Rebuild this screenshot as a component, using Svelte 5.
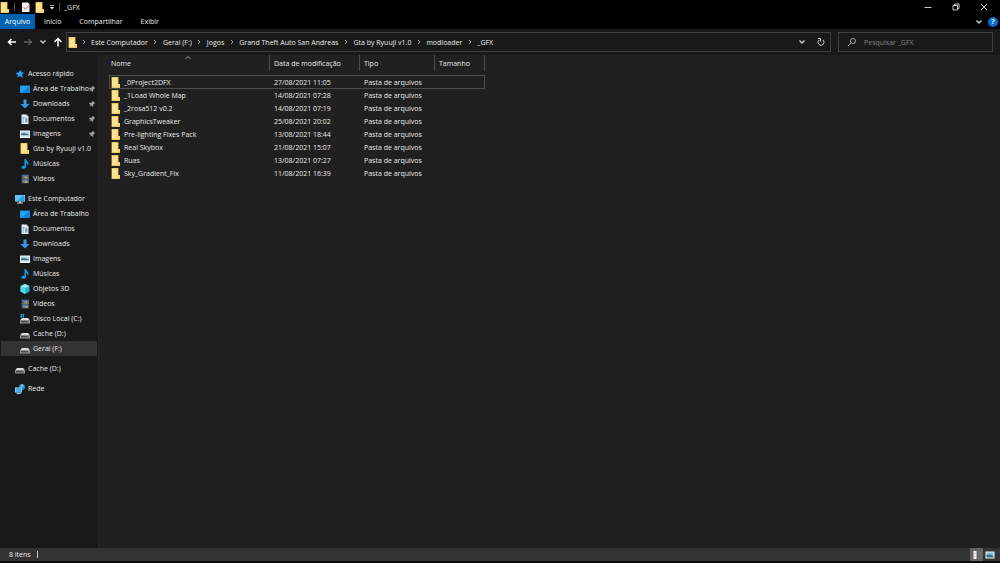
<script lang="ts">
  type NavItem = { name: string; icon: string; pinned?: boolean; selected?: boolean };
  type NavGroup = { root: NavItem; items: NavItem[] };

  const tabs = ["Início", "Compartilhar", "Exibir"];
  const crumbs = [
    "Este Computador",
    "Geral (F:)",
    "Jogos",
    "Grand Theft Auto San Andreas",
    "Gta by Ryuuji v1.0",
    "modloader",
    "_GFX",
  ];

  const groups: NavGroup[] = [
    {
      root: { name: "Acesso rápido", icon: "star" },
      items: [
        { name: "Área de Trabalho", icon: "desktop", pinned: true },
        { name: "Downloads", icon: "download", pinned: true },
        { name: "Documentos", icon: "document", pinned: true },
        { name: "Imagens", icon: "image", pinned: true },
        { name: "Gta by Ryuuji v1.0", icon: "folder" },
        { name: "Músicas", icon: "music" },
        { name: "Vídeos", icon: "video" },
      ],
    },
    {
      root: { name: "Este Computador", icon: "computer" },
      items: [
        { name: "Área de Trabalho", icon: "desktop" },
        { name: "Documentos", icon: "document" },
        { name: "Downloads", icon: "download" },
        { name: "Imagens", icon: "image" },
        { name: "Músicas", icon: "music" },
        { name: "Objetos 3D", icon: "cube" },
        { name: "Vídeos", icon: "video" },
        { name: "Disco Local (C:)", icon: "system" },
        { name: "Cache (D:)", icon: "drive" },
        { name: "Geral (F:)", icon: "drive", selected: true },
      ],
    },
    { root: { name: "Cache (D:)", icon: "drive" }, items: [] },
    { root: { name: "Rede", icon: "network" }, items: [] },
  ];

  const files = [
    { name: "_0Project2DFX", date: "27/08/2021 11:05" },
    { name: "_1Load Whole Map", date: "14/08/2021 07:28" },
    { name: "_2rosa512 v0.2", date: "14/08/2021 07:19" },
    { name: "GraphicsTweaker", date: "25/08/2021 20:02" },
    { name: "Pre-lighting Fixes Pack", date: "13/08/2021 18:44" },
    { name: "Real Skybox", date: "21/08/2021 15:07" },
    { name: "Ruas", date: "13/08/2021 07:27" },
    { name: "Sky_Gradient_Fix", date: "11/08/2021 16:39" },
  ];

  let focused = $state(0);
  let query = $state("");
</script>

{#snippet icon(name: string)}
  <svg class="icon icon-{name}" viewBox={name === "folder" ? "0 0 20 22" : "0 0 20 20"} aria-hidden="true">
    {#if name === "folder"}
      <path d="M1 0h14v14h3v8H1z" fill="#d9ad45" />
      <path d="M2 1h12v20H2z" fill="#fde391" />
      <path d="M14 14h4v7h-4z" fill="#f6d777" />
      <path d="M12 2h2v19h-2z" fill="#f8d878" />
    {:else if name === "star"}
      <path d="M11 2l2 5 6 0-5 4 2 7-6-4-6 3 2-5-5-4 6-1z" fill="#2a9df4" />
    {:else if name === "desktop"}
      <path d="M0 3h20v15H0z" fill="#0a84e0" />
      <path d="M1 4h18L4 17H1z" fill="#1fa4f5" />
    {:else if name === "download"}
      <path d="M7 1h6v9h6l-9 9-9-9h6z" fill="#3a96e8" />
    {:else if name === "document"}
      <path d="M3 1h10l4 4v15H3z" fill="#e6eef4" />
      <path d="M13 1v4h4z" fill="#9fb4c4" />
      <path d="M5 6h4v3H5zM5 11h3v2H5zM5 15h3v2H5z" fill="#5a9fd0" />
      <path d="M10 8h5v9h-5z" fill="#8da6b8" />
    {:else if name === "image"}
      <path d="M0 3h20v15H0z" fill="#edf2f5" />
      <path d="M2 5h16v6H2z" fill="#a9d4ee" />
      <path d="M2 9l6-1 10 3v2H2z" fill="#3f6f80" />
      <path d="M2 13h16v2H2z" fill="#c4dce8" />
    {:else if name === "music"}
      <path d="M9 0h3c0 4 6 5 5 11l-2 3c1-4-2-6-3-7v9c0 4-9 5-9 1 0-2 3-4 6-3z" fill="#149df2" />
    {:else if name === "video"}
      <path d="M3 1h15v18H3z" fill="#44484e" />
      <path d="M6 2h9v7H6z" fill="#3f74cc" />
      <path d="M6 11h9v7H6z" fill="#5084c4" />
      <path d="M9 5h6v4H9zM10 14h5v4h-5z" fill="#d0a03a" />
      <path d="M4 3h1v2H4zM4 8h1v2H4zM4 13h1v2H4zM16 3h1v2h-1zM16 8h1v2h-1zM16 13h1v2h-1z" fill="#aaa" />
    {:else if name === "computer"}
      <path d="M0 2h20v13H0z" fill="#9ad7f7" />
      <path d="M1 3h18v11H1z" fill="#2d9ee4" />
      <path d="M1 3h15L4 14H1z" fill="#65c3f4" />
      <path d="M8 15h4v2h4v2H4v-2h4z" fill="#b7c9d5" />
    {:else if name === "cube"}
      <path d="M10 0l9 4v11l-9 5-9-5V4z" fill="#22b7cf" />
      <path d="M10 0l9 4-9 4-9-4z" fill="#9eeaf4" />
      <path d="M1 4l9 4v12l-9-5z" fill="#55d5e5" />
    {:else if name === "system" || name === "drive"}
      {#if name === "system"}
        <path d="M1 0h3v3H1zM5 0h3v3H5zM1 4h3v3H1zM5 4h3v3H5z" fill="#19b4ee" />
      {/if}
      <path d="M4 8h12l4 5H0z" fill="#dcdcdc" />
      <path d="M0 13h20v6H0z" fill="#9b9b9b" />
      <path d="M2 14h16v3H2z" fill="#4a4a4a" />
      <path d="M15 15h3v1h-3z" fill="#62e06a" />
    {:else if name === "network"}
      <circle cx="14" cy="6" r="6" fill="#2c86c8" />
      <path d="M11 2l5-1 1 4-4 1z" fill="#8fd0f0" />
      <path d="M0 7h14v10H0z" fill="#b8e4f8" />
      <path d="M1 8h12v8H1z" fill="#45aee6" />
      <path d="M5 17h4v1h3v2H3v-2h2z" fill="#9db9c9" />
    {:else if name === "pin"}
      <path d="M12 2l6 6-2 1-3 3v4l-2 1-4-4-5 5 4-6-4-4 2-1h4l3-3z" fill="#98a0a6" />
    {:else if name === "check"}
      <path d="M2 1h12l3 3v16H2z" fill="#f2f0ef" />
      <path d="M5 10l4 5 6-8" fill="none" stroke="#db6847" stroke-width="2" />
    {:else if name === "customize"}
      <path d="M3 3h14v3H3zM3 10h14l-7 8z" fill="#eee" />
    {:else if name === "back"}
      <path d="M18 10H3M9 4l-6 6 6 6" class="line strong" />
    {:else if name === "forward"}
      <path d="M2 10h15M11 4l6 6-6 6" class="line dim" />
    {:else if name === "up"}
      <path d="M10 19V3M3 10l7-7 7 7" class="line strong" />
    {:else if name === "down"}
      <path d="M5 7l5 5 5-5" class="line bold" />
    {:else if name === "next"}
      <path d="M8 6l4 4-4 4" class="line thin" />
    {:else if name === "sort"}
      <path d="M5 12l5-5 5 5" class="line thin" />
    {:else if name === "refresh"}
      <path d="M14 6a6 6 0 1 1-8 0M4 3h5v6" class="line" />
    {:else if name === "search"}
      <circle cx="12" cy="8" r="5" class="line thin" />
      <path d="M8 12l-6 6" class="line thin" />
    {:else if name === "minimize"}
      <path d="M3 11h14" class="line" />
    {:else if name === "restore"}
      <path d="M4 7h9v9H4zM7 7V4h9v9h-3" class="line" />
    {:else if name === "close"}
      <path d="M4 4l12 12M16 4L4 16" class="line" />
    {:else if name === "details"}
      <path d="M3 2h6v16H3z" fill="#f4f4f4" />
      <path d="M5 6h2v2H5zM5 12h2v2H5z" fill="#cf7777" />
      <path d="M12 5h2M16 5h3M12 10h2M16 10h3M12 15h2M16 15h3" stroke="#999" />
    {:else if name === "thumbs"}
      <path d="M1 3h18v14H1z" fill="#f2f5f8" />
      <path d="M3 5h14v6H3z" fill="#78bced" />
      <path d="M3 10l7-1 7 3v3H3z" fill="#397083" />
    {/if}
  </svg>
{/snippet}

{#snippet navRow(item: NavItem, child: boolean)}
  <a class="nav-row" class:child class:selected={item.selected} href="#{item.icon}">
    {@render icon(item.icon)}
    <span class="label">{item.name}</span>
    {#if item.pinned}
      {@render icon("pin")}
    {/if}
  </a>
{/snippet}

<div class="window">
  <header class="titlebar">
    <div class="quick">
      {@render icon("folder")}
      <span class="bar"></span>
      <button aria-label="Propriedades">{@render icon("check")}</button>
      <button aria-label="Nova pasta">{@render icon("folder")}</button>
      <button class="small" aria-label="Personalizar">{@render icon("customize")}</button>
      <span class="bar"></span>
    </div>
    <span class="title">_GFX</span>
    <div class="controls">
      <button aria-label="Minimizar">{@render icon("minimize")}</button>
      <button aria-label="Restaurar">{@render icon("restore")}</button>
      <button aria-label="Fechar">{@render icon("close")}</button>
    </div>
  </header>

  <nav class="ribbon">
    <button class="file">Arquivo</button>
    {#each tabs as tab}
      <button class="tab">{tab}</button>
    {/each}
    <div class="ribbon-end">
      <button aria-label="Expandir faixa">{@render icon("down")}</button>
      <button class="help" aria-label="Ajuda">?</button>
    </div>
  </nav>

  <div class="toolbar">
    <div class="history">
      <button aria-label="Voltar">{@render icon("back")}</button>
      <button aria-label="Avançar">{@render icon("forward")}</button>
      <button class="small" aria-label="Locais recentes">{@render icon("down")}</button>
      <button aria-label="Acima">{@render icon("up")}</button>
    </div>
    <div class="address">
      {@render icon("folder")}
      <div class="crumbs">
        {#each crumbs as crumb}
          <span class="sep">{@render icon("next")}</span>
          <button class="crumb">{crumb}</button>
        {/each}
      </div>
      <div class="address-end">
        <button aria-label="Locais anteriores">{@render icon("down")}</button>
        <button aria-label="Atualizar">{@render icon("refresh")}</button>
      </div>
    </div>
    <label class="search">
      {@render icon("search")}
      <input type="text" placeholder="Pesquisar _GFX" aria-label="Pesquisar _GFX" bind:value={query} />
    </label>
  </div>

  <div class="body">
    <aside class="sidebar">
      {#each groups as group}
        <div class="group">
          {@render navRow(group.root, false)}
          {#each group.items as item}
            {@render navRow(item, true)}
          {/each}
        </div>
      {/each}
    </aside>

    <main class="content">
      <table>
        <colgroup>
          <col class="c-name" />
          <col class="c-date" />
          <col class="c-type" />
          <col class="c-size" />
        </colgroup>
        <thead>
          <tr>
            <th class="sorted">Nome<span class="sort">{@render icon("sort")}</span></th>
            <th>Data de modificação</th>
            <th>Tipo</th>
            <th>Tamanho</th>
          </tr>
        </thead>
        <tbody>
          {#each files as file, i}
            <tr class:focused={focused === i} onclick={() => (focused = i)}>
              <td><span class="file-name">{@render icon("folder")}{file.name}</span></td>
              <td>{file.date}</td>
              <td>Pasta de arquivos</td>
              <td></td>
            </tr>
          {/each}
        </tbody>
      </table>
    </main>
  </div>

  <footer class="status">
    <span class="count">{files.length} itens</span>
    <div class="views">
      <button class="active" aria-label="Detalhes">{@render icon("details")}</button>
      <button aria-label="Ícones grandes">{@render icon("thumbs")}</button>
    </div>
  </footer>
</div>

<style>
  :global(body) {
    margin: 0;
    background: #000;
  }

  .window {
    --text: #eaeaea;
    --line: #404040;
    min-height: 100vh;
    box-sizing: border-box;
    display: flex;
    flex-direction: column;
    border-bottom: 2px solid #0c0c0c;
    background: #202020;
    color: var(--text);
    font-family: "Open Sans", "Noto Sans", sans-serif;
    font-size: 7px;
    line-height: 13px;
    white-space: nowrap;
    cursor: default;
  }

  button {
    padding: 0;
    border: 0;
    background: none;
    color: inherit;
    font: inherit;
    display: flex;
    align-items: center;
    justify-content: center;
  }

  .icon { display: block; width: 10px; height: 10px; flex: none; }
  .icon-folder { height: 11px; }
  .icon-pin { width: 8px; height: 8px; }
  .line { fill: none; stroke: #c8c8c8; stroke-width: 2; }
  .strong { stroke: #fff; stroke-width: 3; }
  .bold { stroke-width: 3; }
  .dim { stroke: #808080; }
  .thin { stroke: #a0a0a0; }

  /* title bar */
  .titlebar {
    display: flex;
    align-items: center;
    height: 14px;
    background: #000;
  }
  .quick { display: flex; align-items: center; gap: 4px; }
  .quick .bar { width: 1px; height: 8px; margin-right: 2px; background: #555; }
  .quick .small { width: 6px; }
  .quick .small .icon { width: 6px; }
  .title { margin-left: 2px; }
  .controls { display: flex; margin-left: auto; padding-right: 2px; }
  .controls button { width: 28px; height: 14px; }

  /* ribbon */
  .ribbon {
    display: flex;
    height: 15px;
    background: #000;
  }
  .ribbon .file { width: 35px; background: #0063b1; color: #fff; }
  .ribbon .tab { padding: 0 9px; }
  .ribbon-end { display: flex; align-items: center; gap: 4px; margin-left: auto; padding-right: 2px; }
  .help {
    width: 10px;
    height: 10px;
    border-radius: 50%;
    background: #0b6fcb;
    color: #fff;
    font-weight: 700;
    line-height: 10px;
  }

  /* address bar */
  .toolbar {
    display: flex;
    align-items: center;
    gap: 7px;
    height: 26px;
    padding: 0 7px;
    box-sizing: border-box;
    background: #191919;
  }
  .history { display: flex; align-items: center; gap: 6px; margin-right: -4px; }
  .history .small { width: 8px; }
  .address, .search {
    display: flex;
    align-items: center;
    height: 20px;
    box-sizing: border-box;
    border: 1px solid var(--line);
    background: #191919;
  }
  .address { flex: 1; padding-left: 1px; }
  .crumbs { display: flex; margin-left: -2px; }
  .sep { width: 15px; display: flex; align-items: center; justify-content: center; }
  .address-end { display: flex; margin-left: auto; }
  .address-end button { width: 19px; height: 18px; }
  .search { width: 155px; padding: 0 8px; gap: 7px; }
  .search input {
    flex: 1;
    min-width: 0;
    padding: 0;
    border: 0;
    outline: 0;
    background: none;
    color: var(--text);
    font: inherit;
  }
  .search input::placeholder { color: #858585; opacity: 1; }

  .body { flex: 1; display: flex; }

  /* navigation pane */
  .sidebar {
    width: 99px;
    flex: none;
    box-sizing: border-box;
    padding: 11px 1px 0;
    border-right: 1px solid #262626;
    background: #191919;
  }
  .group { margin-bottom: 5px; }
  .nav-row {
    display: flex;
    align-items: center;
    gap: 3px;
    height: 15px;
    padding: 0 1px 0 14px;
    color: var(--text);
    text-decoration: none;
  }
  .nav-row.child { padding-left: 19px; }
  .nav-row.selected { background: #333; }
  .label { flex: 1; min-width: 0; }

  /* file list */
  .content { flex: 1; padding-left: 10px; }
  table {
    table-layout: fixed;
    width: 376px;
    border-collapse: separate;
    border-spacing: 0;
  }
  .c-name { width: 161px; }
  .c-date { width: 90px; }
  .c-type { width: 75px; }
  .c-size { width: 50px; }
  th, td { padding: 0 4px; text-align: left; font-weight: 400; }
  th { height: 16px; border-right: 1px solid #4a4a4a; }
  th:first-child, td:first-child { padding-left: 2px; }
  td { height: 13px; }
  tbody tr:first-child td { height: 14px; }
  thead::after { content: ""; display: block; height: 4px; }
  .sorted { position: relative; }
  .sort { position: absolute; top: -2px; left: 46%; }
  .sort { line-height: 10px; }
  .file-name { display: flex; align-items: center; gap: 3px; }
  tr.focused { outline: 1px solid #4c4c4c; outline-offset: -1px; }

  /* status bar */
  .status {
    display: flex;
    align-items: center;
    height: 13px;
    padding: 0 4px 0 9px;
    background: #333;
  }
  .count { padding-right: 6px; border-right: 1px solid #ccc; line-height: 7px; }
  .views { display: flex; margin-left: auto; }
  .views button { width: 13px; height: 13px; }
  .views .active { background: #636363; }
</style>
